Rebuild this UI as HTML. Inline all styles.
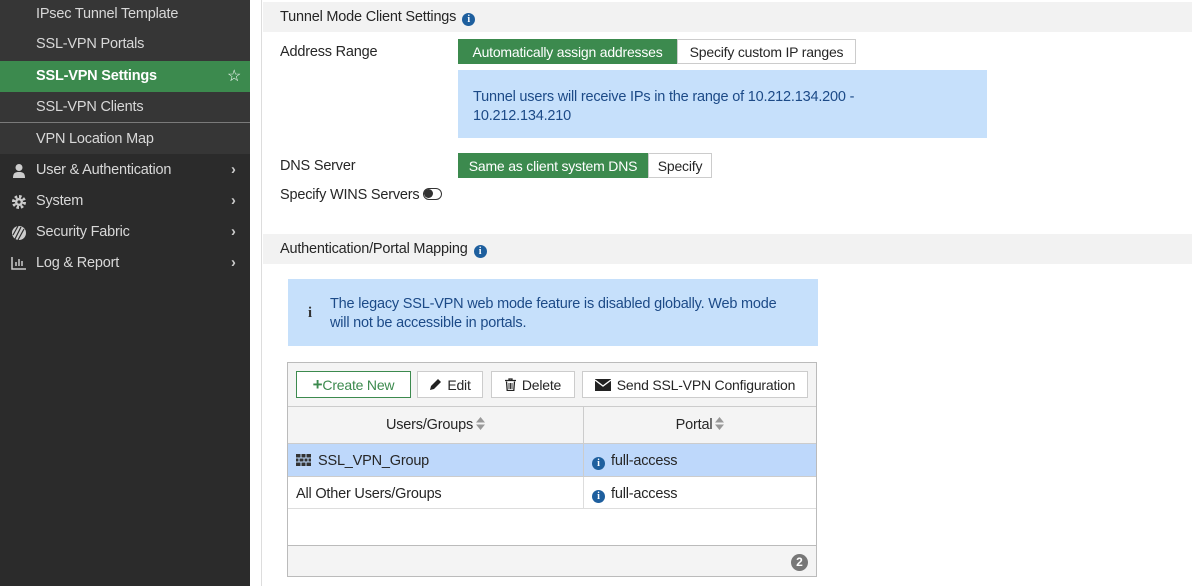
<!DOCTYPE html>
<html><head><style>
*{box-sizing:border-box;margin:0;padding:0}
body{width:1192px;height:586px;overflow:hidden;background:#fff;font-family:"Liberation Sans",sans-serif;font-size:14px;color:#262626;position:relative;letter-spacing:-0.2px}
.sb{position:absolute;left:0;top:0;width:250px;height:586px;background:#2b2b2b}
.sub{position:absolute;left:0;width:250px;height:31px;background:#363636;color:#d8d8d8;padding-left:36px;line-height:29px;font-size:14.5px}
.sub.bt{border-bottom:1px solid #7a7a7a}
.sub.act{background:#3c8a4e;color:#fff;font-weight:bold}
.top{position:absolute;left:0;width:250px;height:31px;color:#d8d8d8;padding-left:36px;line-height:31px;font-size:14.5px}
.top .ic{position:absolute;left:11px;top:8px}
.top .ch{position:absolute;left:231px;top:0;color:#ccc;font-weight:bold}
.gap{position:absolute;left:250px;top:0;width:12px;height:586px;background:#fff;border-right:1px solid #ddd}
.hd{position:absolute;left:263px;width:929px;height:30px;background:#f2f2f2;padding-left:17px;line-height:31px;font-size:14.5px}
.info{display:inline-block;width:13px;height:13px;border-radius:50%;background:#1e5f9e;color:#fff;font-size:10px;font-weight:bold;text-align:center;line-height:13px;font-family:"Liberation Serif",serif;vertical-align:-1px;margin-left:6px;letter-spacing:0}
.lbl{position:absolute;left:280px;font-size:14.5px}
.seg{position:absolute;height:25px;display:flex;font-size:14px}
.seg span{line-height:24px;border:1px solid #ccc;background:#fff;text-align:center;white-space:nowrap}
.seg span.on{background:#3c8a4e;color:#fff;border-color:#3c8a4e}
.blue{position:absolute;background:#c6e0fb;color:#1c4a87;font-size:14.5px;line-height:19px}
.tbl{position:absolute;left:287px;top:362px;width:530px;height:215px;border:1px solid #bbb;background:#fff}
.btn{position:absolute;top:8px;height:27px;border:1px solid #ccc;background:#fff;line-height:26px;font-size:14px;text-align:center;white-space:nowrap}
.srt{display:inline-block;vertical-align:-1px;margin-left:3px}
</style></head><body>
<div class="sb">
<div class="sub bt" style="top:0">IPsec Tunnel Template</div>
<div class="sub" style="top:30px">SSL-VPN Portals</div>
<div class="sub act" style="top:61px;line-height:31px">SSL-VPN Settings<span style="position:absolute;left:227px;font-weight:normal;font-size:16px">☆</span></div>
<div class="sub bt" style="top:92px;line-height:31px">SSL-VPN Clients</div>
<div class="sub" style="top:123px;line-height:33px">VPN Location Map</div>
<div class="top" style="top:155px"><svg class="ic" width="16" height="16" viewBox="0 0 16 16"><circle cx="8" cy="4.5" r="3.5" fill="#ccc"/><path d="M2 15c0-5 2-6 6-6s6 1 6 6z" fill="#ccc"/></svg>User &amp; Authentication<span class="ch">›</span></div>
<div class="top" style="top:186px"><svg class="ic" width="16" height="16" viewBox="0 0 16 16"><circle cx="8" cy="8" r="5.5" fill="none" stroke="#ccc" stroke-width="3" stroke-dasharray="2.5 1.8"/><circle cx="8" cy="8" r="4" fill="#ccc"/><circle cx="8" cy="8" r="1.6" fill="#2b2b2b"/></svg>System<span class="ch">›</span></div>
<div class="top" style="top:217px"><svg class="ic" width="16" height="16" viewBox="0 0 16 16"><circle cx="8" cy="8" r="7" fill="#ccc"/><path d="M4 14L10 2M7 15L13 4M2 10L7 1" stroke="#2b2b2b" stroke-width="1.2"/></svg>Security Fabric<span class="ch">›</span></div>
<div class="top" style="top:248px"><svg class="ic" width="16" height="14" viewBox="0 0 16 14"><path d="M1 1v12h14" fill="none" stroke="#ccc" stroke-width="1.5"/><path d="M5 10V6M8 10V3M11 10V5" stroke="#ccc" stroke-width="1.5"/></svg>Log &amp; Report<span class="ch">›</span></div>
</div>
<div class="gap"></div>
<div class="hd" style="top:2px">Tunnel Mode Client Settings<span class="info">i</span></div>
<div class="lbl" style="top:44px">Address Range</div>
<div class="seg" style="left:458px;top:39px"><span class="on" style="width:219px">Automatically assign addresses</span><span style="width:179px">Specify custom IP ranges</span></div>
<div class="blue" style="left:458px;top:70px;width:529px;height:68px;padding:18px 0 0 15px">Tunnel users will receive IPs in the range of 10.212.134.200 -<br>10.212.134.210</div>
<div class="lbl" style="top:158px">DNS Server</div>
<div class="seg" style="left:458px;top:153px"><span class="on" style="width:190px">Same as client system DNS</span><span style="width:64px">Specify</span></div>
<div class="lbl" style="top:187px">Specify WINS Servers <span style="display:inline-block;width:19px;height:12px;border:1.5px solid #333;border-radius:6px;vertical-align:-1px;position:relative"><span style="position:absolute;left:0;top:0;width:9px;height:9px;border-radius:50%;background:#333"></span></span></div>
<div class="hd" style="top:234px">Authentication/Portal Mapping<span class="info">i</span></div>
<div class="blue" style="left:288px;top:279px;width:530px;height:67px;padding:16px 0 0 42px"><span style="position:absolute;left:20px;top:25px;font-weight:bold;font-family:'Liberation Serif',serif;color:#333">i</span>The legacy SSL-VPN web mode feature is disabled globally. Web mode<br>will not be accessible in portals.</div>
<div class="tbl">
<div style="position:absolute;left:0;top:0;width:528px;height:43px;background:#f4f4f4"></div>
<div class="btn" style="left:8px;width:115px;border-color:#3c8a4e;color:#3c8a4e"><b style="font-size:17px">+</b>Create New</div>
<div class="btn" style="left:129px;width:66px"><svg width="13" height="13" viewBox="0 0 13 13" style="vertical-align:-1px;margin-right:5px"><path d="M1 12l1-4 7-7 3 3-7 7z" fill="#222"/></svg>Edit</div>
<div class="btn" style="left:203px;width:84px"><svg width="11" height="13" viewBox="0 0 11 13" style="vertical-align:-1px;margin-right:6px"><path d="M0 2.5h11M4 2.5V1h3v1.5M1.5 3.5l.7 9h6.6l.7-9" fill="none" stroke="#222" stroke-width="1.3"/><path d="M4 5v6M5.5 5v6M7 5v6" stroke="#222" stroke-width=".9"/></svg>Delete</div>
<div class="btn" style="left:294px;width:226px"><svg width="16" height="12" viewBox="0 0 16 12" style="vertical-align:-1px;margin-right:6px"><rect width="16" height="12" fill="#222"/><path d="M0 1l8 6 8-6" fill="none" stroke="#fff" stroke-width="1.3"/></svg>Send SSL-VPN Configuration</div>
<div style="position:absolute;left:0;top:43px;width:528px;height:38px;background:#f4f4f4;border-top:1px solid #ccc;border-bottom:1px solid #ccc;line-height:36px;font-size:14.5px">
<span style="position:absolute;left:0;width:295px;text-align:center">Users/Groups<svg class="srt" width="9" height="13" viewBox="0 0 9 13"><path d="M0 5.5L4.5 0 9 5.5zM0 7.5L4.5 13 9 7.5z" fill="#999"/></svg></span>
<span style="position:absolute;left:295px;top:0;height:36px;border-left:1px solid #ccc;width:233px;text-align:center">Portal<svg class="srt" width="9" height="13" viewBox="0 0 9 13"><path d="M0 5.5L4.5 0 9 5.5zM0 7.5L4.5 13 9 7.5z" fill="#999"/></svg></span></div>
<div style="position:absolute;left:0;top:81px;width:528px;height:33px;background:#bed8fb;border-bottom:1px solid #ccc;line-height:35px;font-size:14.5px">
<span style="position:absolute;left:8px"><svg width="15" height="12" viewBox="0 0 15 12" style="vertical-align:-1px;margin-right:7px"><rect width="15" height="12" fill="#333"/><path d="M0 4h15M0 8h15M5 0v4M10 0v4M3 4v4M8 4v4M12 4v4M5 8v4M10 8v4" stroke="#bed8fb" stroke-width="1"/></svg>SSL_VPN_Group</span>
<span style="position:absolute;left:295px;top:0;height:33px;border-left:1px solid #ccc;padding-left:8px"><span class="info" style="margin:0 6px 0 0">i</span>full-access</span></div>
<div style="position:absolute;left:0;top:114px;width:528px;height:32px;border-bottom:1px solid #ddd;line-height:34px;font-size:14.5px">
<span style="position:absolute;left:8px">All Other Users/Groups</span>
<span style="position:absolute;left:295px;top:0;height:31px;border-left:1px solid #ddd;padding-left:8px"><span class="info" style="margin:0 6px 0 0">i</span>full-access</span></div>
<div style="position:absolute;left:0;top:182px;width:528px;height:31px;background:#f4f4f4;border-top:1px solid #bbb"><span style="position:absolute;right:8px;top:8px;width:17px;height:17px;border-radius:50%;background:#777;color:#fff;font-size:12px;font-weight:bold;text-align:center;line-height:17px;letter-spacing:0">2</span></div>
</div>
</body></html>
